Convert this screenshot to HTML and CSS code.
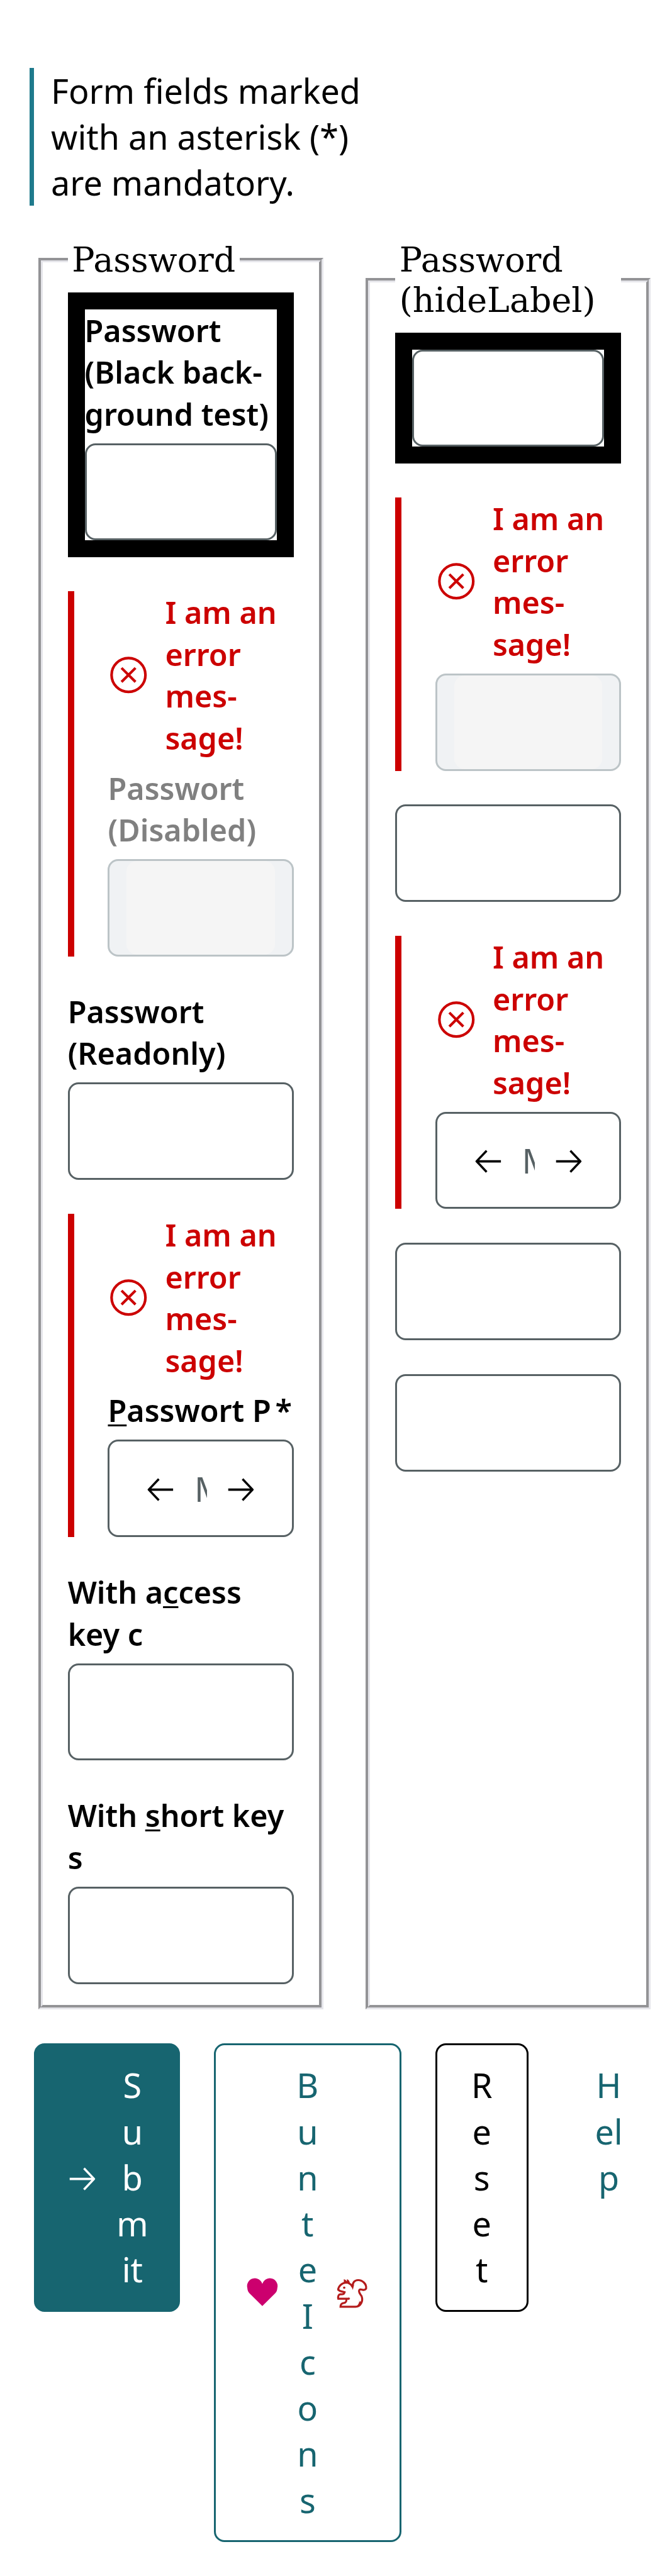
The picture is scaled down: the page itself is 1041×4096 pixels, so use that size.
FILE: index.html
```html
<!DOCTYPE html>
<html lang="en">
<head>
<meta charset="utf-8">
<title>Password fields</title>
<link rel="stylesheet" href="styles.css">
</head>
<body>
<svg class="sprite" aria-hidden="true">
  <symbol id="error" viewBox="0 0 79 79"><g fill="none" stroke="currentColor" stroke-width="5"><circle cx="39.500" cy="39.500" r="32"/><path d="M26.300 26.300 52.700 52.700M52.700 26.300 26.300 52.700"/></g></symbol>
  <symbol id="left" viewBox="0 0 64 64"><path d="M56 34H10M29 14 10 34 29 54" fill="none" stroke="currentColor" stroke-width="4.200" stroke-linejoin="round"/></symbol>
  <symbol id="right" viewBox="0 0 64 64"><path d="M8 34H54M35 14 54 34 35 54" fill="none" stroke="currentColor" stroke-width="4.200" stroke-linejoin="round"/></symbol>
  <symbol id="heart" viewBox="0 0 64 64"><path d="M32 56.700 8 33A14.600 14.600 0 0 1 3.700 22.600A14.600 14.600 0 0 1 32 15A14.600 14.600 0 0 1 60.300 22.600A14.600 14.600 0 0 1 56 33Z" fill="currentColor"/></symbol>
  <symbol id="squirrel" viewBox="0 0 64 64"><g fill="none" stroke="currentColor" stroke-width="3.800"><path d="M32 20C29 15 25 12.500 20 12.500C12 13 5.500 20 5.400 26C9 30 13 29 17.500 30.500C16.500 35 13 34.500 9 34.500C6 35 4.500 39 5.500 43H26.500M21 43C21 49 19.500 50.500 16 51C11 51.500 10 54 9.800 58H38C48 58 53 47 49.500 38C47 34 42.500 30 45.500 26C49 23 54 30 58 24C59.500 15 51 7.700 43 7.700C36 7.700 32 13 32.400 21"/></g><path d="M16 12V6Q20 7 21.500 10L22 6Q27 8 27.500 14L22 13ZM28 15 33 26 35.500 16 32 17ZM44 44Q47 50 41 56L39 59Q49 55 48 47L46 49ZM25 40 28 42.500 25 45Z" fill="currentColor"/><circle cx="16.700" cy="22" r="2.200" fill="currentColor"/></symbol>
</svg>
<p class="note">Form fields marked with an asterisk (*) are mandatory.</p>
<form>
  <div class="groups">
    <fieldset>
      <legend>Password</legend>
      <div class="stack">
        <div class="black"><div class="field">
          <label>Passwort (Black back&shy;ground test)</label>
          <div class="box"><input type="password"></div>
        </div></div>
        <div class="field error">
          <div class="message"><svg><use href="#error"/></svg><span>I am an error mes&shy;sage!</span></div>
          <label class="muted">Passwort (Disabled)</label>
          <div class="box disabled"><input type="password" disabled></div>
        </div>
        <div class="field">
          <label>Passwort (Readonly)</label>
          <div class="box"><input type="password" readonly></div>
        </div>
        <div class="field error">
          <div class="message"><svg><use href="#error"/></svg><span>I am an error mes&shy;sage!</span></div>
          <label class="required"><u>P</u>asswort P</label>
          <div class="box"><svg class="icon"><use href="#left"/></svg><input type="password" placeholder="Mit Icons"><svg class="icon"><use href="#right"/></svg></div>
        </div>
        <div class="field">
          <label>With a<u>c</u>cess key c</label>
          <div class="box"><input type="password"></div>
        </div>
        <div class="field">
          <label>With <u>s</u>hort key s</label>
          <div class="box"><input type="password"></div>
        </div>
      </div>
    </fieldset>
    <fieldset>
      <legend>Password (hideLabel)</legend>
      <div class="stack">
        <div class="black"><div class="field"><div class="box"><input type="password"></div></div></div>
        <div class="field error">
          <div class="message"><svg><use href="#error"/></svg><span>I am an error mes&shy;sage!</span></div>
          <div class="box disabled"><input type="password" disabled></div>
        </div>
        <div class="field"><div class="box"><input type="password" readonly></div></div>
        <div class="field error">
          <div class="message"><svg><use href="#error"/></svg><span>I am an error mes&shy;sage!</span></div>
          <div class="box"><svg class="icon"><use href="#left"/></svg><input type="password" placeholder="Mit Icons"><svg class="icon"><use href="#right"/></svg></div>
        </div>
        <div class="field"><div class="box"><input type="password"></div></div>
        <div class="field"><div class="box"><input type="password"></div></div>
      </div>
    </fieldset>
  </div>
  <div class="actions">
    <button type="button" class="btn primary"><svg class="icon"><use href="#right"/></svg><span class="w-submit">Submit</span></button>
    <button type="button" class="btn secondary"><svg class="icon pink"><use href="#heart"/></svg><span class="w-icons">Bunte Icons</span><svg class="icon red"><use href="#squirrel"/></svg></button>
    <button type="button" class="btn normal"><span class="w-short">Reset</span></button>
    <button type="button" class="btn ghost"><span class="w-short">Help</span></button>
  </div>
</form>
</body>
</html>
```
FILE: styles.css
```css
html {
  font-size: 8.417px;
}

* {
  box-sizing: border-box;
}

body {
  margin: 0;
  padding: 12.8rem 0 0 5.6rem;
  background: #fff;
  color: #000;
  font: 400 6.4rem/8.7rem "Noto Sans", sans-serif;
}

.sprite {
  display: none;
}

.note {
  width: 66rem;
  margin: 0 0 6.45rem;
  padding-left: 3.2rem;
  border-left: 7px solid #1f7a8c;
}

.groups {
  display: grid;
  grid-template-columns: 1fr 1fr;
  gap: 6.4rem;
  padding-left: 0.8rem;
}

fieldset {
  min-width: 0;
  margin: 0 0.8rem;
  padding: 2.26rem 4.76rem 4rem;
  border: 7px groove #e5e5ea;
}

legend {
  padding: 0 0.8rem;
  font: 400 6.4rem/7.6rem "DejaVu Serif", serif;
}

.stack {
  display: flex;
  flex-direction: column;
  gap: 6.4rem;
}

.black {
  padding: 3.2rem;
  background: #000;
}

.field {
  display: flex;
  flex-direction: column;
  gap: 1.6rem;
  background: #fff;
}

.error {
  padding-left: 6.4rem;
  border-left: 1.2rem solid #c00;
}

label,
.message {
  font-size: 5.76rem;
  font-weight: 600;
  line-height: 7.9rem;
}

.message {
  display: flex;
  align-items: center;
  gap: 2.9rem;
  color: #c00;
}

.message svg {
  flex: none;
  width: 7.9rem;
  height: 7.9rem;
}

.muted {
  color: #808080;
}

.required::after {
  content: "*";
  padding-left: 0.8rem;
}

u {
  text-decoration-thickness: 0.4rem;
  text-underline-offset: 0.5rem;
}

.box {
  display: flex;
  align-items: center;
  height: 18.4rem;
  padding: 0 3.2rem;
  border: 0.4rem solid #576164;
  border-radius: 2rem;
  background: #fff;
}

.icon {
  flex: none;
  width: 6.4rem;
  height: 6.4rem;
}

.box .icon {
  margin-left: 3.2rem;
}

.box .icon:last-child {
  margin: 0 3.2rem 0 0;
}

input {
  flex: 1;
  width: 0;
  min-width: 0;
  height: 100%;
  padding: 0 3.2rem;
  border: 0;
  border-radius: 2rem;
  background: transparent;
  font: inherit;
}

input::placeholder {
  color: #576164;
  opacity: 1;
}

.disabled {
  border-color: #bcc4c7;
  background: #f0f2f4;
}

.disabled input {
  background: #f5f5f5;
}

.actions {
  display: flex;
  align-items: flex-start;
  gap: 6.4rem;
  margin-top: 6.4rem;
  padding-left: 0.8rem;
}

.btn {
  display: flex;
  flex: none;
  align-items: center;
  gap: 3.2rem;
  margin: 0;
  padding: 3.24rem 5.64rem;
  border: 3px solid;
  border-radius: 2rem;
  background: #fff;
  font: inherit;
  text-align: center;
  word-break: break-all;
}

.primary {
  border-color: #176570;
  background: #176570;
  color: #fff;
}

.secondary {
  color: #176570;
}

.normal {
  color: #000;
}

.ghost {
  border-color: transparent;
  color: #176570;
}

.pink {
  color: #cc006e;
}

.red {
  color: #b41c1c;
}

.w-submit {
  width: 6rem;
}

.w-icons {
  width: 4.2rem;
}

.w-short {
  width: 5.6rem;
}
```
